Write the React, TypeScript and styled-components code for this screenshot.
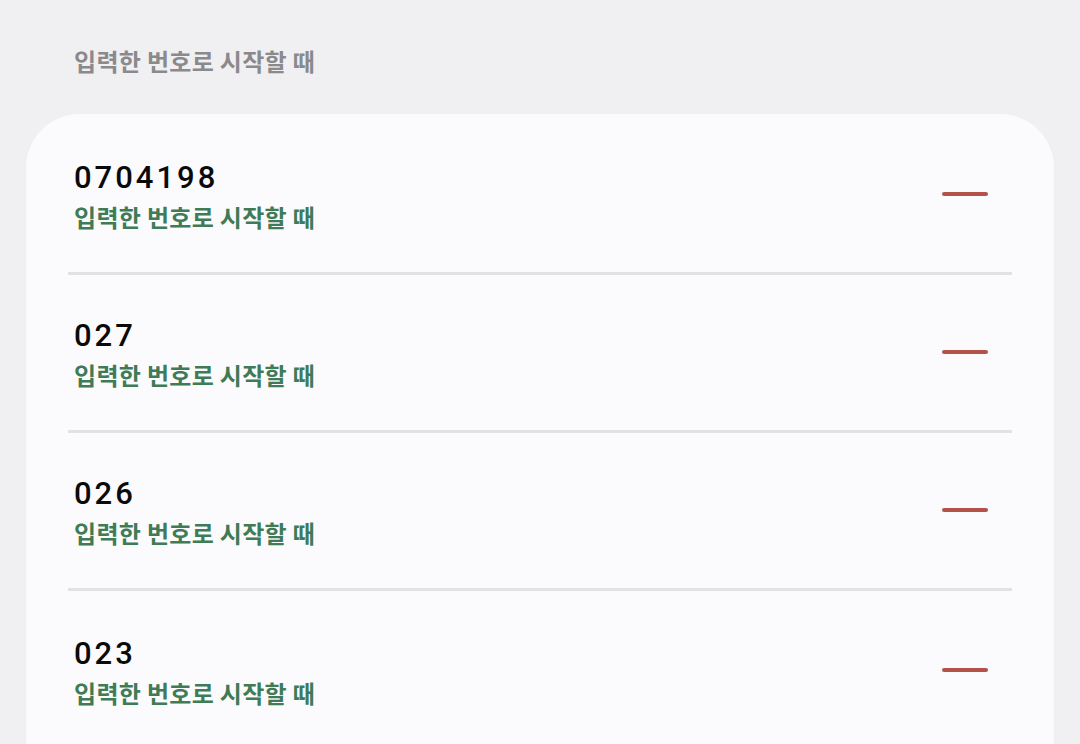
import React from "react";
import styled, { createGlobalStyle } from "styled-components";

const Global = createGlobalStyle`
  html, body { margin: 0; padding: 0; background: #f0f0f2; }
  body { font-family: Roboto, "Noto Sans CJK KR", sans-serif; overflow: hidden; }
`;

const Page = styled.div`
  width: 1080px;
  height: 744px;
  overflow: hidden;
  background: #f0f0f2;
  display: flex;
  flex-direction: column;
`;

const SectionTitle = styled.div`
  flex: none;
  padding: 47px 0 0 74px;
  height: 114px;
  box-sizing: border-box;
  font-family: "Noto Sans CJK KR", sans-serif;
  font-weight: 700;
  font-size: 24px;
  line-height: 28px;
  color: #8a8a8d;
  letter-spacing: 0.3px;
`;

const Card = styled.div`
  margin: 0 26px;
  flex: none;
  background: #fbfbfd;
  border-radius: 54px 54px 0 0;
  padding: 3px 42px 0;
  display: flex;
  flex-direction: column;
`;

const Row = styled.div<{ $last?: boolean }>`
  height: 158px;
  flex: none;
  box-sizing: border-box;
  display: flex;
  align-items: center;
  justify-content: space-between;
  padding: 0 24px 0 6px;
  border-bottom: ${(p) => (p.$last ? "none" : "3px solid #e2e2e4")};
`;

const Texts = styled.div`
  display: flex;
  flex-direction: column;
  padding-top: 4px;
`;

const Number = styled.div`
  font-family: Roboto, sans-serif;
  font-weight: 500;
  font-size: 31px;
  line-height: 34px;
  letter-spacing: 3px;
  color: #0a0a0a;
`;

const Sub = styled.div`
  margin-top: 7px;
  font-family: "Noto Sans CJK KR", sans-serif;
  font-weight: 700;
  font-size: 24px;
  line-height: 30px;
  letter-spacing: 0.3px;
  color: #3e7b56;
`;

const Minus = styled.button`
  width: 46px;
  height: 4px;
  margin-top: -1px;
  border: none;
  padding: 0;
  border-radius: 2px;
  background: #b3524a;
`;

const items = ["0704198", "027", "026", "023"];
const label = "입력한 번호로 시작할 때";

export default function App() {
  return (
    <Page>
      <Global />
      <SectionTitle>{label}</SectionTitle>
      <Card>
        {items.map((n, i) => (
          <Row key={n} $last={i === items.length - 1}>
            <Texts>
              <Number>{n}</Number>
              <Sub>{label}</Sub>
            </Texts>
            <Minus aria-label="remove" />
          </Row>
        ))}
      </Card>
    </Page>
  );
}
